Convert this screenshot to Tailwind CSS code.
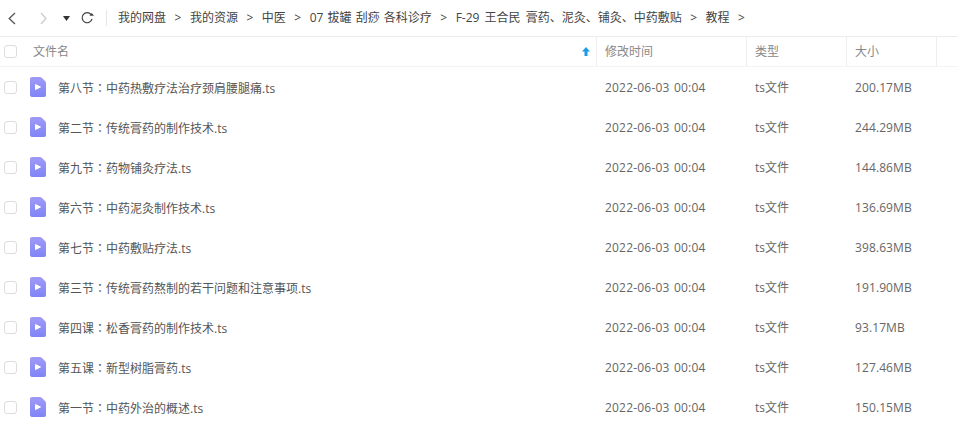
<!DOCTYPE html>
<html lang="zh">

<head>
   <meta charset="UTF-8">
   <title>教程</title>
   <script src="https://cdn.jsdelivr.net/npm/@tailwindcss/browser@4"></script>
</head>

<body class="bg-white w-[958px] h-[444px] overflow-hidden text-[12px] font-['Open_Sans','Noto_Sans_CJK_SC',sans-serif] text-[#666]">
   <!-- top bar -->
   <nav class="flex items-center h-[37px] border-b border-[#ececec] text-[#444]">
      <svg class="ml-[8px] w-[8px] h-[13px]" viewBox="0 0 8 13" fill="none" stroke="#555" stroke-width="1.3"><path d="M7 1 L1.2 6.5 L7 12" /></svg>
      <svg class="ml-[24px] w-[7px] h-[13px]" viewBox="0 0 7 13" fill="none" stroke="#ccc" stroke-width="1.3"><path d="M1 1 L6 6.5 L1 12" /></svg>
      <svg class="ml-[16px] w-[7px] h-[5px]" viewBox="0 0 7 5" fill="#333"><path d="M0 0 H7 L3.5 5 Z" /></svg>
      <svg class="ml-[10px] w-[14px] h-[14px]" viewBox="0 0 14 14" fill="none" stroke="#444" stroke-width="1.2"><path d="M11 3.5 A5 5 0 1 0 12 8" /><path d="M9.5 4.8 H14 L11.8 2 Z" fill="#444" stroke="none" /></svg>
      <div class="ml-[12px] w-px h-[16px] bg-[#e6e6e6]"></div>
      <ol class="ml-[11px] flex items-center whitespace-nowrap [word-spacing:1px]">
         <li>我的网盘</li>
         <li class="mx-[8.5px]">&gt;</li>
         <li>我的资源</li>
         <li class="mx-[8.5px]">&gt;</li>
         <li>中医</li>
         <li class="mx-[8.5px]">&gt;</li>
         <li>07 拔罐 刮痧 各科诊疗</li>
         <li class="mx-[8.5px]">&gt;</li>
         <li class="[word-spacing:2px]">F-29 王合民 膏药、泥灸、铺灸、中药敷贴</li>
         <li class="mx-[8.5px]">&gt;</li>
         <li>教程</li>
         <li class="mx-[8.5px]">&gt;</li>
      </ol>
   </nav>

   <!-- table header -->
   <div class="flex items-center h-[30px] border-b border-[#f3f3f3] text-[#888]">
      <span class="ml-[4px] w-[13px] h-[13px] border border-[#ddd] rounded-[3px]"></span>
      <div class="ml-[16px] w-[564px] h-full flex items-center justify-between border-r border-[#eee] pr-[6px]">
         <span>文件名</span>
         <svg class="w-[8px] h-[9px]" viewBox="0 0 8 9" fill="#1e9be8"><path d="M4 0 L8 4.5 H5.5 V9 H2.5 V4.5 H0 Z" /></svg>
      </div>
      <div class="w-[150px] h-full flex items-center border-r border-[#eee] pl-[8px]">修改时间</div>
      <div class="w-[100px] h-full flex items-center border-r border-[#eee] pl-[8px]">类型</div>
      <div class="w-[90px] h-full flex items-center border-r border-[#eee] pl-[8px]">大小</div>
   </div>

   <!-- shared gradient for the video file icon -->
   <svg class="absolute w-0 h-0">
      <defs>
         <linearGradient id="video-icon" x1="0" y1="0" x2="0" y2="1">
            <stop offset="0" stop-color="#a09af6" />
            <stop offset="1" stop-color="#7f84f6" />
         </linearGradient>
      </defs>
   </svg>

   <!-- rows -->
   <div>
      <div class="flex items-center h-[40px]">
         <span class="ml-[4px] w-[13px] h-[13px] border border-[#ddd] rounded-[3px]"></span>
         <svg class="ml-[13px] w-[16px] h-[20px]" viewBox="0 0 16 20"><path d="M2 0 H10 Q11 0 12 1 L15 4 Q16 5 16 6 V18 A2 2 0 0 1 14 20 H2 A2 2 0 0 1 0 18 V2 A2 2 0 0 1 2 0 Z" fill="url(#video-icon)" /><path d="M5.5 7.5 L10.5 10 L5.5 12.5 Z" fill="#fff" stroke="#fff" stroke-linejoin="round" /></svg>
         <span class="ml-[12px] w-[547px] pt-[2px] text-[#555]">第八节<span lang="zh-TW" class="font-['Noto_Sans_CJK_TC']">：</span>中药热敷疗法治疗颈肩腰腿痛.ts</span>
         <span class="w-[150px] pt-[2px] tracking-[0.2px] [word-spacing:1px]">2022-06-03 00:04</span>
         <span class="w-[100px] pt-[2px]">ts文件</span>
         <span class="pt-[2px] tracking-[0.1px]">200.17MB</span>
      </div>
      <div class="flex items-center h-[40px]">
         <span class="ml-[4px] w-[13px] h-[13px] border border-[#ddd] rounded-[3px]"></span>
         <svg class="ml-[13px] w-[16px] h-[20px]" viewBox="0 0 16 20"><path d="M2 0 H10 Q11 0 12 1 L15 4 Q16 5 16 6 V18 A2 2 0 0 1 14 20 H2 A2 2 0 0 1 0 18 V2 A2 2 0 0 1 2 0 Z" fill="url(#video-icon)" /><path d="M5.5 7.5 L10.5 10 L5.5 12.5 Z" fill="#fff" stroke="#fff" stroke-linejoin="round" /></svg>
         <span class="ml-[12px] w-[547px] pt-[2px] text-[#555]">第二节<span lang="zh-TW" class="font-['Noto_Sans_CJK_TC']">：</span>传统膏药的制作技术.ts</span>
         <span class="w-[150px] pt-[2px] tracking-[0.2px] [word-spacing:1px]">2022-06-03 00:04</span>
         <span class="w-[100px] pt-[2px]">ts文件</span>
         <span class="pt-[2px] tracking-[0.1px]">244.29MB</span>
      </div>
      <div class="flex items-center h-[40px]">
         <span class="ml-[4px] w-[13px] h-[13px] border border-[#ddd] rounded-[3px]"></span>
         <svg class="ml-[13px] w-[16px] h-[20px]" viewBox="0 0 16 20"><path d="M2 0 H10 Q11 0 12 1 L15 4 Q16 5 16 6 V18 A2 2 0 0 1 14 20 H2 A2 2 0 0 1 0 18 V2 A2 2 0 0 1 2 0 Z" fill="url(#video-icon)" /><path d="M5.5 7.5 L10.5 10 L5.5 12.5 Z" fill="#fff" stroke="#fff" stroke-linejoin="round" /></svg>
         <span class="ml-[12px] w-[547px] pt-[2px] text-[#555]">第九节<span lang="zh-TW" class="font-['Noto_Sans_CJK_TC']">：</span>药物铺灸疗法.ts</span>
         <span class="w-[150px] pt-[2px] tracking-[0.2px] [word-spacing:1px]">2022-06-03 00:04</span>
         <span class="w-[100px] pt-[2px]">ts文件</span>
         <span class="pt-[2px] tracking-[0.1px]">144.86MB</span>
      </div>
      <div class="flex items-center h-[40px]">
         <span class="ml-[4px] w-[13px] h-[13px] border border-[#ddd] rounded-[3px]"></span>
         <svg class="ml-[13px] w-[16px] h-[20px]" viewBox="0 0 16 20"><path d="M2 0 H10 Q11 0 12 1 L15 4 Q16 5 16 6 V18 A2 2 0 0 1 14 20 H2 A2 2 0 0 1 0 18 V2 A2 2 0 0 1 2 0 Z" fill="url(#video-icon)" /><path d="M5.5 7.5 L10.5 10 L5.5 12.5 Z" fill="#fff" stroke="#fff" stroke-linejoin="round" /></svg>
         <span class="ml-[12px] w-[547px] pt-[2px] text-[#555]">第六节<span lang="zh-TW" class="font-['Noto_Sans_CJK_TC']">：</span>中药泥灸制作技术.ts</span>
         <span class="w-[150px] pt-[2px] tracking-[0.2px] [word-spacing:1px]">2022-06-03 00:04</span>
         <span class="w-[100px] pt-[2px]">ts文件</span>
         <span class="pt-[2px] tracking-[0.1px]">136.69MB</span>
      </div>
      <div class="flex items-center h-[40px]">
         <span class="ml-[4px] w-[13px] h-[13px] border border-[#ddd] rounded-[3px]"></span>
         <svg class="ml-[13px] w-[16px] h-[20px]" viewBox="0 0 16 20"><path d="M2 0 H10 Q11 0 12 1 L15 4 Q16 5 16 6 V18 A2 2 0 0 1 14 20 H2 A2 2 0 0 1 0 18 V2 A2 2 0 0 1 2 0 Z" fill="url(#video-icon)" /><path d="M5.5 7.5 L10.5 10 L5.5 12.5 Z" fill="#fff" stroke="#fff" stroke-linejoin="round" /></svg>
         <span class="ml-[12px] w-[547px] pt-[2px] text-[#555]">第七节<span lang="zh-TW" class="font-['Noto_Sans_CJK_TC']">：</span>中药敷贴疗法.ts</span>
         <span class="w-[150px] pt-[2px] tracking-[0.2px] [word-spacing:1px]">2022-06-03 00:04</span>
         <span class="w-[100px] pt-[2px]">ts文件</span>
         <span class="pt-[2px] tracking-[0.1px]">398.63MB</span>
      </div>
      <div class="flex items-center h-[40px]">
         <span class="ml-[4px] w-[13px] h-[13px] border border-[#ddd] rounded-[3px]"></span>
         <svg class="ml-[13px] w-[16px] h-[20px]" viewBox="0 0 16 20"><path d="M2 0 H10 Q11 0 12 1 L15 4 Q16 5 16 6 V18 A2 2 0 0 1 14 20 H2 A2 2 0 0 1 0 18 V2 A2 2 0 0 1 2 0 Z" fill="url(#video-icon)" /><path d="M5.5 7.5 L10.5 10 L5.5 12.5 Z" fill="#fff" stroke="#fff" stroke-linejoin="round" /></svg>
         <span class="ml-[12px] w-[547px] pt-[2px] text-[#555]">第三节<span lang="zh-TW" class="font-['Noto_Sans_CJK_TC']">：</span>传统膏药熬制的若干问题和注意事项.ts</span>
         <span class="w-[150px] pt-[2px] tracking-[0.2px] [word-spacing:1px]">2022-06-03 00:04</span>
         <span class="w-[100px] pt-[2px]">ts文件</span>
         <span class="pt-[2px] tracking-[0.1px]">191.90MB</span>
      </div>
      <div class="flex items-center h-[40px]">
         <span class="ml-[4px] w-[13px] h-[13px] border border-[#ddd] rounded-[3px]"></span>
         <svg class="ml-[13px] w-[16px] h-[20px]" viewBox="0 0 16 20"><path d="M2 0 H10 Q11 0 12 1 L15 4 Q16 5 16 6 V18 A2 2 0 0 1 14 20 H2 A2 2 0 0 1 0 18 V2 A2 2 0 0 1 2 0 Z" fill="url(#video-icon)" /><path d="M5.5 7.5 L10.5 10 L5.5 12.5 Z" fill="#fff" stroke="#fff" stroke-linejoin="round" /></svg>
         <span class="ml-[12px] w-[547px] pt-[2px] text-[#555]">第四课<span lang="zh-TW" class="font-['Noto_Sans_CJK_TC']">：</span>松香膏药的制作技术.ts</span>
         <span class="w-[150px] pt-[2px] tracking-[0.2px] [word-spacing:1px]">2022-06-03 00:04</span>
         <span class="w-[100px] pt-[2px]">ts文件</span>
         <span class="pt-[2px] tracking-[0.1px]">93.17MB</span>
      </div>
      <div class="flex items-center h-[40px]">
         <span class="ml-[4px] w-[13px] h-[13px] border border-[#ddd] rounded-[3px]"></span>
         <svg class="ml-[13px] w-[16px] h-[20px]" viewBox="0 0 16 20"><path d="M2 0 H10 Q11 0 12 1 L15 4 Q16 5 16 6 V18 A2 2 0 0 1 14 20 H2 A2 2 0 0 1 0 18 V2 A2 2 0 0 1 2 0 Z" fill="url(#video-icon)" /><path d="M5.5 7.5 L10.5 10 L5.5 12.5 Z" fill="#fff" stroke="#fff" stroke-linejoin="round" /></svg>
         <span class="ml-[12px] w-[547px] pt-[2px] text-[#555]">第五课<span lang="zh-TW" class="font-['Noto_Sans_CJK_TC']">：</span>新型树脂膏药.ts</span>
         <span class="w-[150px] pt-[2px] tracking-[0.2px] [word-spacing:1px]">2022-06-03 00:04</span>
         <span class="w-[100px] pt-[2px]">ts文件</span>
         <span class="pt-[2px] tracking-[0.1px]">127.46MB</span>
      </div>
      <div class="flex items-center h-[40px]">
         <span class="ml-[4px] w-[13px] h-[13px] border border-[#ddd] rounded-[3px]"></span>
         <svg class="ml-[13px] w-[16px] h-[20px]" viewBox="0 0 16 20"><path d="M2 0 H10 Q11 0 12 1 L15 4 Q16 5 16 6 V18 A2 2 0 0 1 14 20 H2 A2 2 0 0 1 0 18 V2 A2 2 0 0 1 2 0 Z" fill="url(#video-icon)" /><path d="M5.5 7.5 L10.5 10 L5.5 12.5 Z" fill="#fff" stroke="#fff" stroke-linejoin="round" /></svg>
         <span class="ml-[12px] w-[547px] pt-[2px] text-[#555]">第一节<span lang="zh-TW" class="font-['Noto_Sans_CJK_TC']">：</span>中药外治的概述.ts</span>
         <span class="w-[150px] pt-[2px] tracking-[0.2px] [word-spacing:1px]">2022-06-03 00:04</span>
         <span class="w-[100px] pt-[2px]">ts文件</span>
         <span class="pt-[2px] tracking-[0.1px]">150.15MB</span>
      </div>
   </div>
</body>

</html>
